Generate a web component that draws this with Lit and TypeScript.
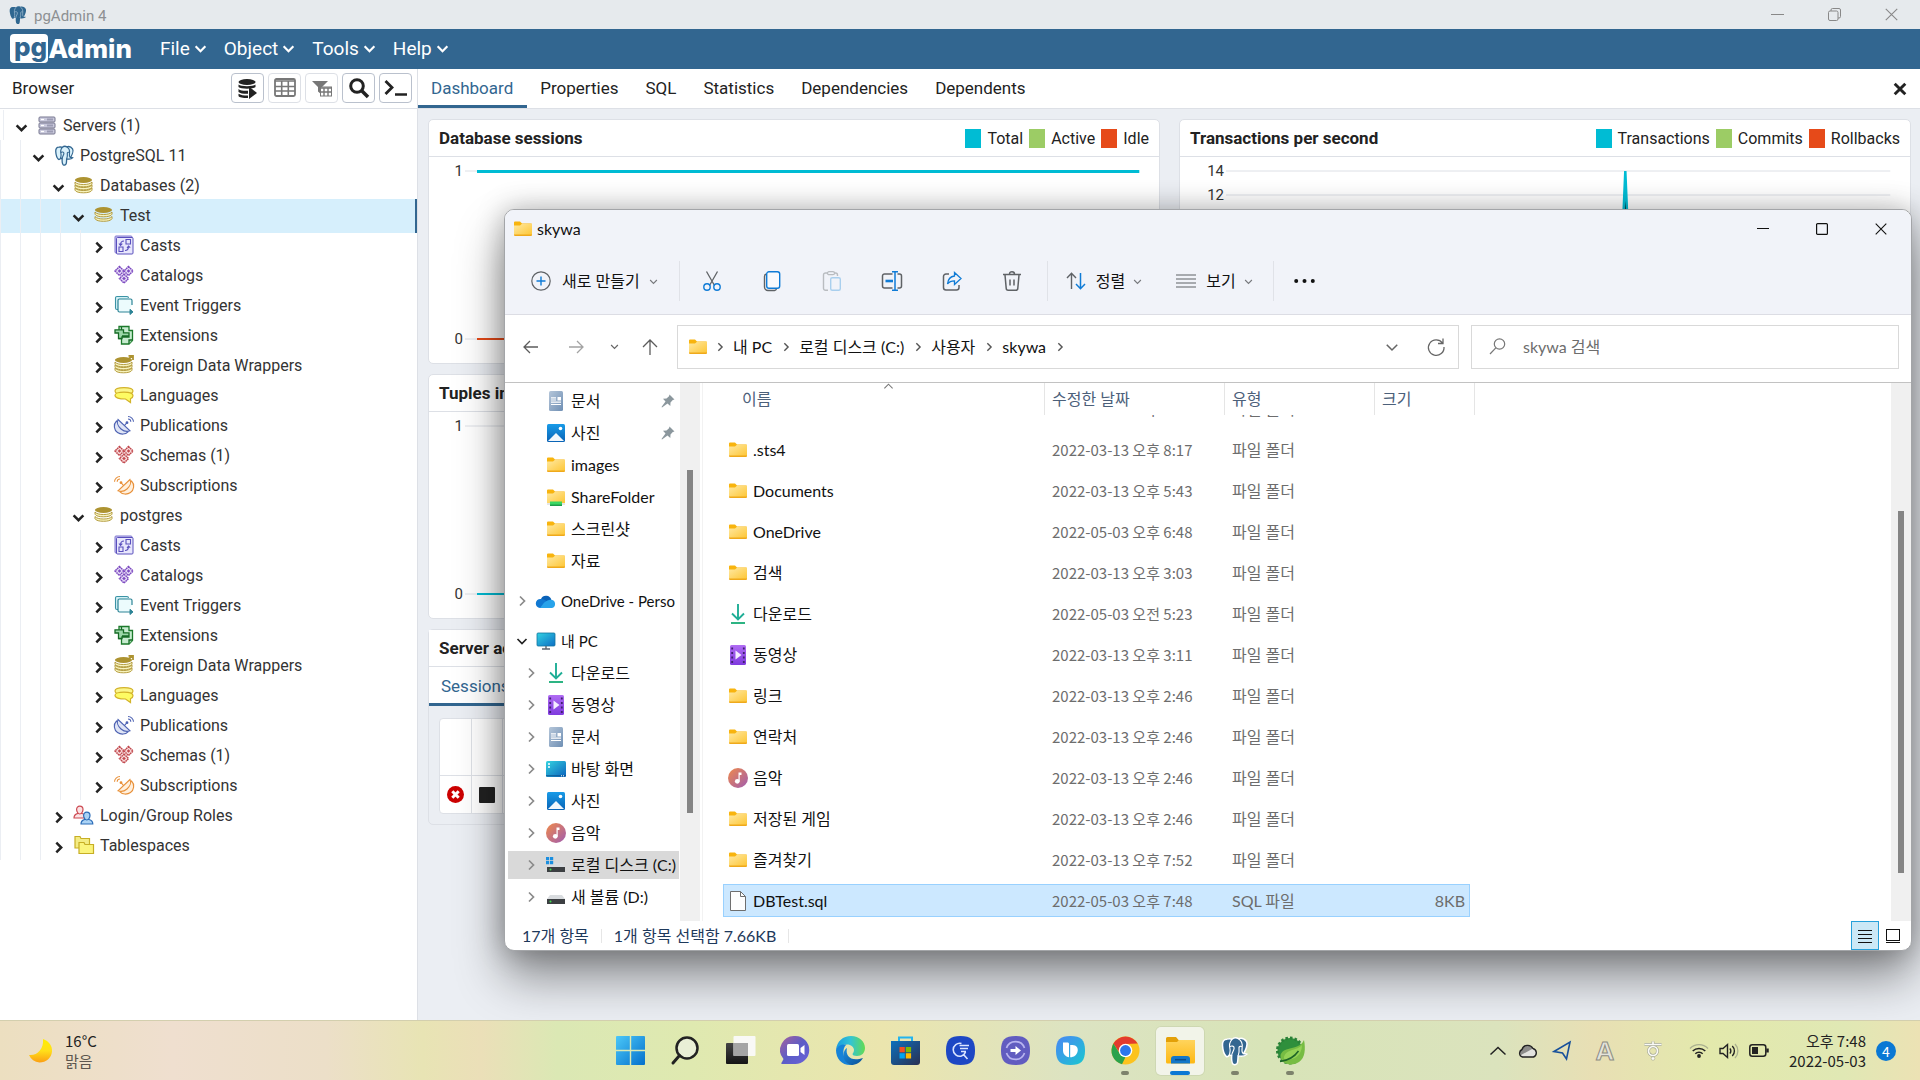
import { LitElement, html, css, svg, nothing } from "lit";
import { customElement } from "lit/decorators.js";
import { classMap } from "lit/directives/class-map.js";

/* ---------- icons ---------- */

const icon = (w: number, h: number, box: string, body: unknown) =>
  html`<svg width=${w} height=${h} viewBox=${box} fill="none" aria-hidden="true">${body}</svg>`;

const elephantShape = svg`
  <path d="M4.500 2.500C2 2.500.8 4.500 1 7.500c.2 3.200 1.500 7.500 3 8.800 1 .8 1.900-.3 2.600-1.300 .5 .4 1.100 .6 1.700 .7-.1 2.500-.1 5.700 1.200 6.800 1 .8 2.900 .5 3.400-1 .5-1.500 .4-3.800 .6-5.600 2.800 .6 5.900-.1 7-1.400-.8-.6-2-.1-2.700-.4 1.900-2.700 3.700-7.500 2.400-9.700C18.600 2 16 1.300 13.700 2.100 12.300 1.300 10 1.400 8.600 2.600 7.500 2.200 6 2.200 4.500 2.500z"/>`;
const elephantLines = svg`
  <path d="M8.600 2.700C6.500 5 6.300 8 7 10.500c.4 1.700-.2 2.600-.4 4.400M13.700 2.200c2.200 1.300 3.500 4.100 3 7.300-.2 1.500-.3 3.500.6 4.400M7 8.500c1.200-.9 3.300-.6 3.300 1 0 2-1.500 3-2 6M16.700 8.500c-.8-.5-2.400-.3-2.500.6.2 2 .2 4-.6 6.500"/>`;
const elephantBlue = (w: number) => icon(w, w, "0 0 22 24", svg`
  <g fill="#336791" stroke="#fff" stroke-width="1.200">${elephantShape}</g>
  <g stroke="#fff" stroke-width=".9">${elephantLines}</g>`);
const elephantSmall = icon(20, 20, "0 0 22 24", svg`
  <g fill="#2f6790">${elephantShape}</g><g stroke="#9db9cf" stroke-width=".9">${elephantLines}</g>`);
const elephantLight = icon(21, 21, "0 0 22 24", svg`
  <g fill="#d9f1fb" stroke="#336791" stroke-width="1.500">${elephantShape}</g>
  <g stroke="#336791" stroke-width="1.300">${elephantLines}</g>`);

const chev = (dir: "down" | "right" | "up", size: number, color: string, sw: number) => {
  const d = { down: "M1.500 4l4.500 4.500L10.500 4", right: "M4 1.500L8.500 6 4 10.500", up: "M1.500 8L6 3.500 10.500 8" }[dir];
  return icon(size, size, "0 0 12 12", svg`<path d=${d} stroke=${color} stroke-width=${sw}/>`);
};

const servers = icon(18, 19, "0 0 18 19", svg`${[1, 7, 13].map((y) => svg`
  <rect x="1" y=${y} width="16" height="5" rx="1" fill="#c9c9dc" stroke="#77778f"/><path d=${`M3 ${y + 2}.500h3`} stroke="#fff" stroke-width="1.200"/>
  <path d=${`M9 ${y + 2}.500h6`} stroke="#9c9cb4" stroke-width="2"/>`)}`);
const band = (y: number) => svg`<path d=${`M1 ${y}c1.500 1.800 4.500 2.500 8.500 2.500s7-.7 8.500-2.500v2.200c-1 1.900-4.500 2.600-8.500 2.600S2 ${y + 4.100} 1 ${y + 2.200}z`} fill="#f7f3bd" stroke="#ad9331" stroke-width=".9"/>`;
const diskStack = (bands: number[], arrow: boolean) => icon(20, 20, "0 0 20 20", svg`
  ${bands.map(band)}
  <ellipse cx="9.500" cy="5" rx="8.600" ry="2.900" fill="#ad9331"/>
  ${arrow ? svg`<path d="M14 4.500L18 1M14.500.900H19V5" stroke="#ad9331" stroke-width="1.800"/>` : nothing}`);
const database = diskStack([11.500, 7], false);
const databases = diskStack([13, 10, 7], false);
const casts = icon(20, 20, "0 0 20 20", svg`
  <rect x="1" y="1" width="17" height="17" rx="1" fill="#c9c5f3" stroke="#8078cf"/>
  <rect x="2.500" y="2.500" width="16.500" height="16.500" rx="1" fill="#e8e7fc" stroke="#5a50bd"/>
  <path d="M12 4.500h4.500V9H12zM5 12h4v4.500H5zM10 6C7.500 6 6.500 7.500 6.500 10M5 8.500L6.500 10.500 8.300 8.700M11 15.500c2.500 0 3.500-1.500 3.500-4M13 13l1.500-2 1.700 1.700" stroke="#5a50bd" stroke-width="1.100"/>`);
const diamonds = (c: string, bg: string) => icon(20, 20, "0 0 20 20", svg`
  ${[[5.500, 6], [14.500, 6], [10, 13.500]].map(([x, y]) => svg`
    <path d=${`M${x} ${y - 4.500}l4.500 4.500l-4.500 4.500l-4.500-4.500z`} fill=${bg} stroke=${c} stroke-width="1.500" stroke-dasharray="1.700 .5"/>
    <path d=${`M${x} ${y - 1.800}l1.800 1.800l-1.800 1.800l-1.800-1.800z`} fill=${c}/>`)}`);
const eventTrigger = icon(20, 20, "0 0 20 20", svg`
  <path d="M4 14.500H3A1.500 1.500 0 011.500 13V3A1.500 1.500 0 013 1.500h10A1.500 1.500 0 0114.500 3" stroke="#3c93a5" stroke-width="1.100" fill="#d2f0f5"/>
  <path d="M18 10V5.500A1.500 1.500 0 0016.500 4h-11A1.500 1.500 0 004 5.500v10A1.500 1.500 0 005.500 17H14" fill="#ecfbfd" stroke="#2c8496" stroke-width="1.200"/>
  <path d="M14 17h3M16 14.300v5.200l3-2.600z" stroke="#2c8496" fill="#2c8496"/>`);
const extensions = icon(20, 20, "0 0 20 20", svg`
  <path d="M5 1.500h10v4h3.500v10L15 19H7.500v-5.500H5z" fill="#c7ecd0" stroke="#1c7a2b" stroke-width="1.300"/>
  <path d="M1 4.800h8.500v3H15V12H8v1.500H4.500V8H1zM8 11h7M15 19v-4h3.500M7.500 2v3" fill="#9bd8a8" stroke="#166b25" stroke-width="1.300"/>`);
const languages = icon(20, 20, "0 0 20 20", svg`
  <g stroke="#d3b32a" stroke-width="1.200"><path d="M1 6C1 4 4.500 2.700 10 2.700S19 4 19 6s-3 3.500-9 3.500S1 8 1 6z" fill="#fbf68b"/>
  <path d="M1 10.200c0-1.800 3.500-3 9-3s9 1.400 9 3.600c0 1.200-.8 2.200-2.500 2.900V17.500l-5-3.500C5 14 1 12.800 1 10.200z" fill="#fdfb63"/></g>`);
const dish = (c: string, bg: string) => svg`
  <path d="M3 6C-.5 9.500.5 15 4 17.500c3.500 2.400 8 2 10.500-.7z" fill=${bg} stroke=${c} stroke-width="1.100"/>
  <path d="M4.500 4.500c-1.500 3 0 7 3 9.500s6 3 9 1.800zM11 10.500l2.500-2.800" fill=${bg} stroke=${c} stroke-width="1.100"/>
  <circle cx="13.500" cy="7.700" r="1.400" fill=${c}/>
  <path d="M14.500 4c1.500 0 2.800 1.300 2.800 2.800M14.500 1.500c3 0 5.500 2.300 5.500 5.300" stroke=${c} stroke-width="1.100"/>`;
const publications = icon(22, 20, "0 0 21 20", dish("#4e63b3", "#dfe4f5"));
const subscriptions = icon(22, 20, "0 0 21 20", svg`<g transform="translate(21 0) scale(-1 1)">${dish("#e8913a", "#fff0de")}</g>`);
const person = (x: number, y: number, c: string, bg: string) => svg`
  <g transform=${`translate(${x} ${y})`} fill=${bg} stroke=${c} stroke-width="1.200"><path d="M1 13c0-3.500 2-4 3.500-4.500h4.500c2 .5 3.800 1 3.800 4.500z"/>
  <path d="M6.800 1.200c2 0 3.200 1.300 3.200 3.300S8.500 9 6.800 9 3.600 6.500 3.600 4.500s1.200-3.300 3.200-3.300z"/></g>`;
const roles = icon(22, 20, "0 0 22 20", svg`${person(0, 0, "#cc4a52", "#fbe3e5")}${person(7, 6, "#2b6cb8", "#abd3f5")}`);
const tablespaces = icon(20, 20, "0 0 20 20", svg`<g stroke="#c7ae25" stroke-width="1.200">
  <path d="M1 1.500h5l1 2h8.500V13H1z" fill="#f4ec84"/><path d="M5 7.500h5l1 2h8.500v9H5z" fill="#fbf47c"/></g>`);

const folder = icon(18, 16, "0 0 18 16", svg`
  <defs><linearGradient id="fo" x1="0" y1="0" x2="1" y2="1"><stop offset="0" stop-color="#ffe9a2"/><stop offset="1" stop-color="#fdc636"/></linearGradient></defs>
  <path d="M0 1.500A1 1 0 011 .500h5L8 2.500h9a1 1 0 011 1V6H0z" fill="#f8b40e"/>
  <path d="M0 4.500h6L8 2.800h10V14H0z" fill="url(#fo)"/><path d="M0 13.500h18v.5a1 1 0 01-1 1H1a1 1 0 01-1-1z" fill="#efa91b"/>`);
const shareFolder = icon(18, 18, "0 0 18 18", svg`
  <defs><linearGradient id="sf" x1="0" y1="0" x2="1" y2="1"><stop offset="0" stop-color="#ffe9a2"/><stop offset="1" stop-color="#fdc636"/></linearGradient></defs>
  <path d="M0 2.500a1 1 0 011-1h5l2 2h9a1 1 0 011 1V7H0z" fill="#f8b40e"/><path d="M0 5.500h6l2-1.700h10V15H0z" fill="url(#sf)"/>
  <path d="M0 16h18" stroke="#c9cdd0"/><path d="M3 13.500h12V18H3z" fill="#3bd763"/><path d="M3 16.500h12V18H3z" fill="#1d9c4a"/>`);
const docIcon = icon(18, 20, "0 0 18 20", svg`
  <defs><linearGradient id="dc" x1="0" y1="0" x2="1" y2="1"><stop offset="0" stop-color="#b5c6d9"/><stop offset="1" stop-color="#6f8fb4"/></linearGradient></defs>
  <rect x="2" width="14" height="20" rx="1.500" fill="url(#dc)"/><path d="M4 6.800h5M4 9h5M4 11.200h10M4 13.500h10" stroke="#fff" stroke-width="1.200"/><path d="M10.500 6h3.500v3.500h-3.500z" fill="#fff"/>`);
const picIcon = icon(18, 18, "0 0 18 18", svg`
  <defs><linearGradient id="pc" x1="0" y1="0" x2="0" y2="1"><stop offset="0" stop-color="#189be8"/><stop offset="1" stop-color="#0a63b5"/></linearGradient></defs>
  <rect width="18" height="18" rx="1.500" fill="url(#pc)"/><path d="M1 17l8-8 8 8z" fill="#f2f7fc"/><circle cx="13.500" cy="4.500" r="1.800" fill="#fff"/>`);
const downIcon = icon(18, 20, "0 0 18 20", svg`
  <path d="M9 0v15M3 9.500l6 6 6-6" stroke="#1fae96" stroke-width="1.900"/><path d="M2 19h14" stroke="#22b07d" stroke-width="1.900"/>`);
const videoIcon = icon(18, 20, "0 0 18 20", svg`
  <defs><linearGradient id="vd" x1="0" y1="0" x2="0" y2="1"><stop offset="0" stop-color="#b06cf3"/><stop offset="1" stop-color="#7f3ade"/></linearGradient></defs>
  <rect x="1" width="16" height="20" rx="1.500" fill="url(#vd)"/>
  <path d="M3.200 2.500v16M14.800 2.500v16" stroke="#41206f" stroke-width="1.800" stroke-dasharray="2 2.500"/><path d="M6.500 5.500v9l6-4.500z" fill="#f5edff"/>`);
const musicIcon = icon(20, 20, "0 0 20 20", svg`
  <defs><linearGradient id="mu" x1="0" y1="0" x2="1" y2="1"><stop offset="0" stop-color="#f08a4a"/><stop offset="1" stop-color="#a05cb0"/></linearGradient></defs>
  <circle cx="10" cy="10" r="10" fill="url(#mu)"/><path d="M10.500 4.500h3V7h-1.800v6h-1.200z" fill="#fff"/><circle cx="9.300" cy="13.300" r="2.400" fill="#fff"/>`);
const deskIcon = icon(20, 16, "0 0 20 16", svg`
  <defs><linearGradient id="dk" x1="0" y1="0" x2="1" y2="1"><stop offset="0" stop-color="#35d3e0"/><stop offset="1" stop-color="#0b62bd"/></linearGradient></defs>
  <rect width="20" height="16" rx="1.500" fill="url(#dk)"/><path d="M2 3h2M2 6h2" stroke="#fff" stroke-width="1.600"/><path d="M0 14.800h20" stroke="#0c5590"/><path d="M15 14.800h1M17 14.800h1" stroke="#fff"/>`);
const pcIcon = icon(18, 17, "0 0 18 17", svg`
  <defs><linearGradient id="mp" x1="0" y1="0" x2="1" y2="1"><stop offset="0" stop-color="#32d2e2"/><stop offset="1" stop-color="#0d6ec5"/></linearGradient></defs>
  <rect width="18" height="13" rx="1" fill="url(#mp)" stroke="#1173a0" stroke-width=".8"/><path d="M9 13v3M5 16h8" stroke="#5d6670" stroke-width="1.400"/>`);
const cloudIcon = icon(20, 13, "0 0 20 13", svg`
  <path d="M5 4a5.500 5.500 0 0110.300.800L10 9z" fill="#0b62b8"/><path d="M4 13a4.200 4.200 0 01.6-9c2.600-.4 4.400 1 6.400 2.300L6 13z" fill="#1078d2"/>
  <path d="M8 7.700c3-2.400 5.500-3.400 7.500-2.900A4.200 4.200 0 0116 13H4z" fill="#28a3ea"/>`);
const drive = (win: boolean) => icon(18, 16, "0 0 18 16", svg`
  <path d="M3 6h12l3 4H0z" fill="#d9dcdf"/><rect y="10" width="18" height="5" fill="#3c3f42"/><circle cx="3.500" cy="12.500" r="1" fill="#40e050"/>
  ${win ? svg`<path d="M-1 0h3.200v3.200H-1zM3 0h3.200v3.200H3zM-1 4h3.200v3.200H-1zM3 4h3.200v3.200H3z" fill="#1b8fe0"/>` : nothing}`);
const fileIcon = icon(18, 20, "0 0 18 20", svg`<path d="M1.500.500h10l5 5v14h-15z" fill="#fdfdfd" stroke="#6e6e6e"/><path d="M11.500.500v5h5" stroke="#6e6e6e"/>`);
const pin = icon(14, 14, "0 0 14 14", svg`<path d="M8.500.500l5 5-1.700.500-2.300 2.500-.2 3.500L6.500 9.500 1 13.500.500 13 4.500 7.500 2 4.700l3.500-.2L8 2.200z" fill="#8b979d"/>`);

const closeX = (s: number, c: string, sw: number) => icon(s, s, "0 0 12 12", svg`<path d="M.7.700l10.600 10.600M11.300.700L.7 11.300" stroke=${c} stroke-width=${sw}/>`);

/* ---------- pgAdmin: object browser ---------- */

type Node = { depth: number; label: string; icon: unknown; open?: boolean; selected?: boolean };
const children = (): Node[] => [
  { depth: 4, label: "Casts", icon: casts },
  { depth: 4, label: "Catalogs", icon: diamonds("#7d4bc0", "#e6dcf7") },
  { depth: 4, label: "Event Triggers", icon: eventTrigger },
  { depth: 4, label: "Extensions", icon: extensions },
  { depth: 4, label: "Foreign Data Wrappers", icon: diskStack([13, 10, 7], true) },
  { depth: 4, label: "Languages", icon: languages },
  { depth: 4, label: "Publications", icon: publications },
  { depth: 4, label: "Schemas (1)", icon: diamonds("#c14a4f", "#f9dcdd") },
  { depth: 4, label: "Subscriptions", icon: subscriptions },
];
const tree: Node[] = [
  { depth: 0, label: "Servers (1)", icon: servers, open: true },
  { depth: 1, label: "PostgreSQL 11", icon: elephantLight, open: true },
  { depth: 2, label: "Databases (2)", icon: databases, open: true },
  { depth: 3, label: "Test", icon: database, open: true, selected: true },
  ...children(),
  { depth: 3, label: "postgres", icon: database, open: true },
  ...children(),
  { depth: 2, label: "Login/Group Roles", icon: roles },
  { depth: 2, label: "Tablespaces", icon: tablespaces },
];

const reset = css`
  *, *::before, *::after { box-sizing: border-box; }
  svg { display: block; flex: none; overflow: visible; }
  button, input { font: inherit; color: inherit; background: none; border: 0; padding: 0; margin: 0; }
  ul, h2 { margin: 0; padding: 0; list-style: none; }
  a { color: inherit; text-decoration: none; }
`;

@customElement("object-browser")
export class ObjectBrowser extends LitElement {
  static styles = [reset, css`
    :host { display: flex; flex-direction: column; background: #fff; border-right: 1px solid #dde0e6; }
    .head { display: flex; align-items: center; height: 40px; padding: 0 5px 2px 12px; border-bottom: 1px solid #dde0e6; gap: 4px; }
    .title { flex: 1; color: #222; font-size: 17px; font-weight: 400; }
    .tool { width: 33px; height: 30px; border: 1px solid #bac1cd; border-radius: 4px; display: grid; place-items: center; }
    .tool.off { border-color: #dde0e6; }
    .tree { padding-top: 1px; }
    .row { display: flex; align-items: center; height: 30px; color: #333; font-size: 16px; }
    .guide { width: 20px; height: 30px; border-left: 1px solid #ebeef3; }
    .body { display: flex; align-items: center; height: 30px; border-left: 1px solid #ebeef3; }
    .root .body { margin-left: 3px; }
    .arrow { width: 20px; margin: 4px 1px 0 11px; }
    .pic { width: 22px; display: grid; place-items: center; margin-right: 5px; }
    .selected { background: #d6effc; height: 34px; margin: -1px 0 -3px; padding-bottom: 2px; border-right: 2px solid #326690; }
  `];
  render() {
    return html`
      <div class="head">
        <h2 class="title">Browser</h2>
        <button class="tool" aria-label="Query Tool">${icon(20, 20, "0 0 20 20", svg`<g fill="#222"><ellipse cx="9" cy="4" rx="8.500" ry="3"/><path d="M.5 6.500c2 2.300 15 2.300 17 0v2.500c-2 2.300-15 2.300-17 0zM.5 11c2 1.800 6 2 9.500 1.800v3c-4 .1-8-.3-9.500-1.800zM.5 15.800c2 1.400 5 1.700 9.500 1.700V20C6 20.100 1 19.500.5 18z"/><path d="M11 8.500l8 6.500-8 6z"/></g>`)}</button>
        <button class="tool off" aria-label="View Data">${icon(22, 19, "0 0 22 19", svg`<rect x="1" y="1" width="20" height="17" rx="1.500" stroke="#777" stroke-width="1.800"/><path d="M1 3h20M1 8.500h20M1 13h20M7.700 3v15M14.300 3v15" stroke="#777" stroke-width="1.600"/>`)}</button>
        <button class="tool off" aria-label="Filtered Rows">${icon(20, 17, "0 0 20 17", svg`<path d="M0 2h16l-6 6v8l-4-3.500V8z" fill="#777"/><rect x="8.500" y="8" width="11" height="9" fill="#fff" stroke="#777"/><path d="M8.500 9h11M8.500 13h11M12 9v8M16 9v8" stroke="#777" stroke-width="1.400"/>`)}</button>
        <button class="tool" aria-label="Search Objects">${icon(20, 20, "0 0 20 20", svg`<circle cx="8" cy="8" r="6.300" stroke="#222" stroke-width="3"/><path d="M12.500 12.500l6.500 6.500" stroke="#222" stroke-width="3.600"/>`)}</button>
        <button class="tool" aria-label="PSQL Tool">${icon(23, 16, "0 0 23 16", svg`<path d="M1.500 1l6.500 6.500L1.500 14" stroke="#222" stroke-width="2.800"/><path d="M11 14.500h12" stroke="#222" stroke-width="2.500"/>`)}</button>
      </div>
      <ul class="tree" role="tree">
        ${tree.map((n) => html`
          <li class=${classMap({ row: true, root: n.depth === 0, selected: !!n.selected })} role="treeitem" aria-expanded=${n.open ? "true" : "false"}>
            ${Array.from({ length: n.depth }, () => html`<span class="guide"></span>`)}
            <span class="body">
              <span class="arrow">${chev(n.open ? "down" : "right", 13, "#222", 2.3)}</span>
              <span class="pic">${n.icon}</span>${n.label}
            </span>
          </li>`)}
      </ul>`;
  }
}

/* ---------- pgAdmin: dashboard ---------- */

type Legend = [string, string][];
type Tick = { label: string; y: number };

@customElement("pg-dashboard")
export class PgDashboard extends LitElement {
  static styles = [reset, css`
    :host { display: flex; flex-direction: column; background: #ebeef3; min-width: 0; overflow: hidden; }
    .tabs { display: flex; height: 40px; background: #fff; border-bottom: 1px solid #dde0e6; font-size: 17px; color: #222; align-items: stretch; }
    .tab { padding: 2px 14px 0 13px; height: 39px; border-bottom: 3px solid transparent; }
    .tab.on { color: #326690; border-color: #326690; }
    .x { margin-left: auto; padding: 0 14px; }
    .grid { display: grid; grid-template-columns: 1fr 1fr; gap: 10px 19px; padding: 10px 9px 0 10px; }
    .card { background: #fff; border: 1px solid #dde0e6; border-radius: 5px; height: 245px; }
    .head { display: flex; align-items: center; height: 37px; padding: 0 10px; border-bottom: 1px solid #dde0e6; gap: 6px; font-size: 16px; color: #222; }
    .name { flex: 1; font-size: 17px; font-weight: 700; }
    .swatch { width: 16px; height: 19px; }
    .plot { display: block; width: 100%; height: 206px; }
    .plot text { font-size: 15px; fill: #333; text-anchor: end; }
    .wide { grid-column: 1 / -1; height: 196px; background: #ebeef3; }
    .wide .head, .subtabs { background: #fff; }
    .subtabs { height: 39px; border-bottom: 1px solid #dde0e6; }
    .subtabs .tab { font-size: 17px; height: 39px; padding: 2px 12px 0; }
    .sessions { margin: 12px 10px; width: 96%; border-collapse: separate; border-spacing: 0; background: #fff; border: 1px solid #dde0e6; border-radius: 4px; }
    .sessions th { height: 57px; border-right: 1px solid #dde0e6; border-bottom: 1px solid #dde0e6; }
    .sessions td { height: 37px; padding: 0 7px; border-right: 1px solid #dde0e6; }
    .narrow { width: 31px; }
  `];
  private card(name: string, legend: Legend, ticks: Tick[], series: unknown) {
    return html`<section class="card">
      <div class="head"><h2 class="name">${name}</h2>
        ${legend.map(([t, c]) => html`<svg class="swatch" viewBox="0 0 16 19"><rect width="16" height="19" fill=${c}/></svg><span>${t}</span>`)}
      </div>
      <svg class="plot">
        ${ticks.map((t) => svg`<text x=${t.label.length > 1 ? 44 : 34} y=${t.y + 5}>${t.label}</text>
          <line x1=${t.label.length > 1 ? 46 : 36} x2="97.300%" y1=${t.y} y2=${t.y} stroke="#dde0e6"/>`)}
        ${series}
      </svg></section>`;
  }
  render() {
    const cyan = "#00bcd4", green = "#9ccc65", red = "#e64a19";
    const unit = [{ label: "1", y: 14 }, { label: "0", y: 182 }];
    return html`
      <div class="tabs">
        ${["Dashboard", "Properties", "SQL", "Statistics", "Dependencies", "Dependents"].map((t, i) =>
          html`<button class=${i ? "tab" : "tab on"}>${t}</button>`)}
        <button class="x" aria-label="Close panel">${closeX(12, "#222", 2.9)}</button>
      </div>
      <div class="grid">
        ${this.card("Database sessions", [["Total", cyan], ["Active", green], ["Idle", red]], unit, svg`
          <line x1="48" x2="97.300%" y1="14.500" y2="14.500" stroke=${cyan} stroke-width="3"/>
          <line x1="48" x2="97.300%" y1="182" y2="182" stroke=${red} stroke-width="2"/>`)}
        ${this.card("Transactions per second", [["Transactions", cyan], ["Commits", green], ["Rollbacks", red]],
          [{ label: "14", y: 14 }, { label: "12", y: 38 }], svg`
          <svg x="61%" y="14" width="20" height="191"><path d="M-5 167L-.5 20 4 167z" fill=${green}/><path d="M-7 167L0 0l7 167" stroke=${cyan} stroke-width="2.500"/></svg>`)}
        ${this.card("Tuples in", [], unit, svg`
          <line x1="48" x2="97.300%" y1="182" y2="182" stroke=${cyan} stroke-width="2"/>`)}
        <section class="card wide">
          <div class="head"><h2 class="name">Server activity</h2></div>
          <div class="subtabs"><button class="tab on">Sessions</button></div>
          <table class="sessions">
            <thead><tr><th class="narrow"></th><th class="narrow"></th><th></th></tr></thead>
            <tbody><tr>
              <td>${icon(17, 17, "0 0 17 17", svg`<circle cx="8.500" cy="8.500" r="8.500" fill="#c00"/><path d="M5.300 5.300l6.400 6.400M11.700 5.300l-6.400 6.400" stroke="#fff" stroke-width="3"/>`)}</td>
              <td>${icon(16, 16, "0 0 16 16", svg`<rect width="16" height="16" rx="1" fill="#222"/>`)}</td><td></td>
            </tr></tbody>
          </table>
        </section>
      </div>`;
  }
}

@customElement("pg-admin")
export class PgAdmin extends LitElement {
  static styles = [reset, css`
    :host { display: flex; flex-direction: column; font-family: Roboto, "Liberation Sans", sans-serif; min-height: 0; }
    .caption { display: flex; align-items: center; height: 29px; background: #e6eaed; color: #8d9092; font-size: 15px; padding-left: 8px; }
    .caption .t { flex: 1; padding: 3px 0 0 6px; }
    .win { width: 57px; height: 29px; display: grid; place-items: center; }
    .menu { display: flex; align-items: center; height: 40px; background: #326690; color: #fff; font-size: 19px; padding: 0 0 2px 10px; }
    .logo { display: flex; align-items: center; font: 800 26px/29px Inter, "Open Sans", sans-serif; margin-right: 19px; }
    .pg { background: #fff; color: #326690; border-radius: 4px; height: 29px; padding: 0 1px 0 4px; line-height: 26px; }
    .item { display: flex; align-items: center; gap: 4px; padding: 0 8px 0 9px; height: 38px; }
    .panels { flex: 1; display: grid; grid-template-columns: 418px 1fr; min-height: 0; }
  `];
  render() {
    return html`
      <header class="caption">${elephantSmall}<span class="t">pgAdmin 4</span>
        <button class="win" aria-label="Minimize">${icon(13, 13, "0 0 13 13", svg`<path d="M0 6.500h13" stroke="#888"/>`)}</button>
        <button class="win" aria-label="Restore">${icon(13, 13, "0 0 13 13", svg`<rect x=".5" y="3" width="9.500" height="9.500" rx="1.500" stroke="#888"/><path d="M3 3V2A1.500 1.500 0 014.500.500h6.500A1.500 1.500 0 0112.500 2v6.500A1.500 1.500 0 0111 10h-1" stroke="#888"/>`)}</button>
        <button class="win" aria-label="Close">${closeX(13, "#888", 1)}</button>
      </header>
      <nav class="menu"><a class="logo" href="#"><span class="pg">pg</span><span>Admin</span></a>
        ${["File", "Object", "Tools", "Help"].map((m) => html`<button class="item">${m}${chev("down", 13, "#fff", 2)}</button>`)}
      </nav>
      <div class="panels"><object-browser></object-browser><pg-dashboard></pg-dashboard></div>`;
  }
}

/* ---------- file explorer ---------- */

type Place = { label: string; icon: unknown; level: number; pinned?: boolean; arrow?: "right" | "down"; current?: boolean };
const places: Place[] = [
  { label: "문서", icon: docIcon, level: 1, pinned: true },
  { label: "사진", icon: picIcon, level: 1, pinned: true },
  { label: "images", icon: folder, level: 1 },
  { label: "ShareFolder", icon: shareFolder, level: 1 },
  { label: "스크린샷", icon: folder, level: 1 },
  { label: "자료", icon: folder, level: 1 },
  { label: "OneDrive - Perso", icon: cloudIcon, level: 0, arrow: "right" },
  { label: "내 PC", icon: pcIcon, level: 0, arrow: "down" },
  { label: "다운로드", icon: downIcon, level: 1, arrow: "right" },
  { label: "동영상", icon: videoIcon, level: 1, arrow: "right" },
  { label: "문서", icon: docIcon, level: 1, arrow: "right" },
  { label: "바탕 화면", icon: deskIcon, level: 1, arrow: "right" },
  { label: "사진", icon: picIcon, level: 1, arrow: "right" },
  { label: "음악", icon: musicIcon, level: 1, arrow: "right" },
  { label: "로컬 디스크 (C:)", icon: drive(true), level: 1, arrow: "right", current: true },
  { label: "새 볼륨 (D:)", icon: drive(false), level: 1, arrow: "right" },
];
const dir = "파일 폴더";
const files: [string, unknown, string, string, string][] = [
  ["", nothing, "2022-03-13 오후 8:17", dir, ""],
  [".sts4", folder, "2022-03-13 오후 8:17", dir, ""],
  ["Documents", folder, "2022-03-13 오후 5:43", dir, ""],
  ["OneDrive", folder, "2022-05-03 오후 6:48", dir, ""],
  ["검색", folder, "2022-03-13 오후 3:03", dir, ""],
  ["다운로드", downIcon, "2022-05-03 오전 5:23", dir, ""],
  ["동영상", videoIcon, "2022-03-13 오후 3:11", dir, ""],
  ["링크", folder, "2022-03-13 오후 2:46", dir, ""],
  ["연락처", folder, "2022-03-13 오후 2:46", dir, ""],
  ["음악", musicIcon, "2022-03-13 오후 2:46", dir, ""],
  ["저장된 게임", folder, "2022-03-13 오후 2:46", dir, ""],
  ["즐겨찾기", folder, "2022-03-13 오후 7:52", dir, ""],
  ["DBTest.sql", fileIcon, "2022-05-03 오후 7:48", "SQL 파일", "8KB"],
];

const G = "#5f6266", B = "#0f7bd6";
const actions: [string, unknown][] = [
  ["잘라내기", icon(20, 20, "0 0 20 20", svg`<path d="M4.500.500l8 14M15.500.500l-8 14" stroke=${G} stroke-width="1.300"/><circle cx="5" cy="16" r="3.200" stroke=${B} stroke-width="1.400"/><circle cx="15" cy="16" r="3.200" stroke=${B} stroke-width="1.400"/>`)],
  ["복사", icon(20, 20, "0 0 20 20", svg`<path d="M4.500 3A2.500 2.500 0 002.500 5.500V16a3.500 3.500 0 003.500 3.500h6.500a2.500 2.500 0 002-1.500" stroke=${G} stroke-width="1.400"/><rect x="4.700" y=".7" width="13" height="16.600" rx="2.300" fill="#f8fafd" stroke=${B} stroke-width="1.400"/>`)],
  ["붙여넣기", icon(20, 20, "0 0 20 20", svg`<path d="M6 19.300H3.500a2 2 0 01-2-2V4a2 2 0 012-2H6M12 2h1.500a2 2 0 012 2v1" stroke="#b9bcc0" stroke-width="1.400"/><rect x="5.500" y=".7" width="7" height="3" rx="1.500" stroke="#b9bcc0" stroke-width="1.300"/><rect x="8.700" y="6.700" width="9.600" height="12.600" rx="1.500" stroke="#a9cfee" stroke-width="1.400"/>`)],
  ["이름 바꾸기", icon(22, 20, "0 0 22 20", svg`<path d="M11.500 3H3.500a2 2 0 00-2 2v10a2 2 0 002 2h8M16.500 3h2a2 2 0 012 2v10a2 2 0 01-2 2h-2" stroke=${G} stroke-width="1.500"/><path d="M14 .700v18.600M11 .700h6M11 19.300h6" stroke=${B} stroke-width="1.500"/><path d="M4.500 10H12" stroke=${B} stroke-width="2.600"/>`)],
  ["공유", icon(20, 20, "0 0 20 20", svg`<path d="M7 3H4A2.500 2.500 0 001.500 5.500v11A2.500 2.500 0 004 19h10.500a2.500 2.500 0 002.500-2.500V14" stroke=${G} stroke-width="1.500"/><path d="M12.500 1.500l6.500 6-6.500 6v-3.700c-3.500 0-5.500 1-7 3.200.4-4 2.600-7.500 7-8z" stroke=${B} stroke-width="1.300"/>`)],
  ["삭제", icon(20, 20, "0 0 20 20", svg`<path d="M1 3.500h18M7.500 3.200C7.500 1.500 8.500.700 10 .700s2.500.8 2.500 2.500M3 4l1.200 13.300a2 2 0 002 2h7.600a2 2 0 002-2L17 4M8 8.500v6M12 8.500v6" stroke=${G} stroke-width="1.500"/>`)],
];

@customElement("file-explorer")
export class FileExplorer extends LitElement {
  static styles = [reset, css`
    :host { display: flex; flex-direction: column; background: #fff; border: 1px solid #a3a5a8; border-radius: 10px; overflow: hidden;
      font: 16px/20px Lato, "Noto Sans CJK KR", sans-serif; color: #111;
      box-shadow: 0 26px 48px rgba(0,0,0,.42), 0 0 28px rgba(0,0,0,.26); }
    .top { background: #f1f3f9; border-bottom: 1px solid #dcdde4; }
    .caption { display: flex; align-items: center; height: 38px; padding: 0 1px 0 9px; }
    .caption .t { flex: 1; padding-left: 5px; }
    .win { width: 59px; height: 34px; display: grid; place-items: center; }
    .commands { display: flex; align-items: center; height: 66px; padding: 0 12px 0 26px; }
    .cmd { display: flex; align-items: center; gap: 8px; height: 40px; }
    .cmd span { padding-left: 2px; }
    .acts { display: flex; padding: 0 5px 0 2px; }
    .act { width: 60px; height: 40px; display: grid; place-items: center; }
    .sep { width: 1px; height: 40px; background: #e0e2e8; }
    .new { padding-right: 21px; }
    .new span { padding: 0 1px 0 3px; }
    .sort { padding: 0 34px 0 18px; }
    .view { padding-right: 20px; }
    .more { padding-left: 20px; }
    .nav { display: flex; align-items: center; height: 68px; padding: 0 12px 4px 7px; border-bottom: 1px solid #c2c2c2; }
    .go { width: 36px; height: 36px; display: grid; place-items: center; }
    .gofwd { margin: 0 2px 0 10px; }
    .goup { margin-right: 9px; }
    .address { flex: 782 1 782px; min-width: 0; display: flex; align-items: center; height: 44px; border: 1px solid #d9d9d9; padding: 0 13px 0 11px; gap: 8px; }
    .crumb { display: flex; align-items: center; gap: 9px; }
    .grow { flex: 1; }
    .refresh { margin-left: 9px; }
    .search { flex: 428 1 428px; min-width: 0; display: flex; align-items: center; height: 44px; border: 1px solid #d9d9d9; margin-left: 12px; padding: 0 17px; gap: 17px; }
    .search input { flex: 1; min-width: 0; outline: 0; }
    .search input::placeholder { color: #6d6d6d; opacity: 1; }
    .main { flex: 1; display: flex; min-height: 0; }
    .side { width: 175px; padding: 2px 1px 0 3px; overflow: hidden; }
    .place { display: flex; align-items: center; height: 32px; white-space: nowrap; }
    .place.group { margin-top: 8px; font-size: 15px; }
    .place.current a { background: #d9d9d9; height: 28px; }
    .place a { display: flex; align-items: center; flex: 1; min-width: 0; height: 32px; }
    .tw { width: 9px; height: 12px; margin: 0 0 0 8px; display: grid; place-items: center; }
    .deep .tw { margin-left: 17px; }
    .pic { width: 20px; display: grid; place-items: center; margin: 0 5px 0 11px; }
    .deep .pic { margin-left: 12px; }
    .pin { margin-left: auto; margin-right: 4px; }
    .track { width: 20px; background: #f0f0f0; padding: 87px 7px 0; }
    .thumb { width: 6px; height: 343px; background: #858585; }
    .right.track { padding-top: 128px; }
    .right .thumb { height: 362px; }
    .list { flex: 1; border: 0; margin-left: 2px; border-left: 1px solid #f2f2f2; display: flex; flex-direction: column; min-width: 0; }
    thead, tbody { display: block; }
    tbody { overflow: hidden; flex: 1; min-height: 0; padding-left: 20px; }
    thead { padding-left: 20px; }
    tr { display: grid; grid-template-columns: 322px 180px 150px 95px; width: 747px; }
    thead tr { grid-template-columns: 322px 180px 150px 100px; width: 752px; }
    th { height: 32px; padding: 6px 0 0 7px; border-right: 1px solid #e5e5e5; color: #4c607a; font-weight: 400; text-align: left; }
    th:first-child { padding-left: 19px; display: flex; gap: 112px; }
    .caret { margin-top: -8px; }
    tbody tr { height: 33px; margin-bottom: 8px; align-items: center; }
    tbody tr:first-child { margin-top: -23px; }
    td { padding: 0 0 0 7px; color: #6d6d6d; white-space: nowrap; }
    .date { font: 15px/20px "Noto Sans CJK KR", sans-serif; }
    td:first-child { display: flex; align-items: center; gap: 5px; padding-left: 5px; color: #111; }
    td:last-child { text-align: right; padding-right: 5px; }
    .fi { width: 20px; display: grid; place-items: center; }
    .sel { background: #cce8ff; box-shadow: inset 0 0 0 1px #99d1ff; }
    .status { display: flex; align-items: center; height: 29px; padding: 0 11px 0 17px; color: #1e395b; }
    .status .bar { width: 1px; height: 14px; background: #e6e6e6; margin: 0 12px; }
    .mode { width: 28px; height: 29px; display: grid; place-items: center; }
    .mode.on { border: 1px solid #26a0da; background: #cbe8f6; }
    .mode.big { width: 14px; margin-left: 7px; }
  `];
  render() {
    const sm = () => chev("down", 9, "#77797d", 1.5);
    return html`
      <div class="top">
        <header class="caption">${folder}<span class="t">skywa</span>
          <button class="win" aria-label="최소화">${icon(12, 12, "0 0 12 12", svg`<path d="M0 5.500h12" stroke="#111"/>`)}</button>
          <button class="win" aria-label="최대화">${icon(12, 12, "0 0 12 12", svg`<rect x=".6" y=".6" width="10.800" height="10.800" rx="1" stroke="#111" stroke-width="1.200"/>`)}</button>
          <button class="win" aria-label="닫기">${closeX(12, "#111", 1.1)}</button>
        </header>
        <div class="commands">
          <button class="cmd new">${icon(20, 20, "0 0 20 20", svg`<circle cx="10" cy="10" r="9.200" stroke=${G} stroke-width="1.200"/><path d="M10 5.500v9M5.500 10h9" stroke=${B} stroke-width="1.400"/>`)}<span>새로 만들기</span>${sm()}</button>
          <i class="sep"></i>
          <div class="acts">${actions.map(([l, i]) => html`<button class="act" aria-label=${l}>${i}</button>`)}</div>
          <i class="sep"></i>
          <button class="cmd sort">${icon(20, 18, "0 0 20 18", svg`<path d="M5.500 17V1.500M1 6l4.500-4.700L10 6" stroke=${G} stroke-width="1.400"/><path d="M14.500 1v15.500M10 12l4.500 4.700L19 12" stroke=${B} stroke-width="1.500"/>`)}<span>정렬</span>${sm()}</button>
          <button class="cmd view">${icon(20, 14, "0 0 20 14", svg`<path d="M0 1h20M0 5h20M0 9h20M0 13h20" stroke=${G} stroke-width="1.200"/>`)}<span>보기</span>${sm()}</button>
          <i class="sep"></i>
          <button class="cmd more" aria-label="더 보기">${icon(21, 4, "0 0 21 4", svg`<g fill="#111"><circle cx="2.200" cy="2" r="2"/><circle cx="10.500" cy="2" r="2"/><circle cx="18.800" cy="2" r="2"/></g>`)}</button>
        </div>
      </div>
      <div class="nav">
        <button class="go" aria-label="뒤로">${icon(15, 14, "0 0 15 14", svg`<path d="M15 7H1M7 1L1 7l6 6" stroke="#5c5c5c" stroke-width="1.300"/>`)}</button>
        <button class="go gofwd" aria-label="앞으로">${icon(15, 14, "0 0 15 14", svg`<path d="M0 7h14M8 1l6 6-6 6" stroke="#a3a3a3" stroke-width="1.300"/>`)}</button>
        <button class="go" aria-label="최근 위치">${chev("down", 9, "#666", 1.6)}</button>
        <button class="go goup" aria-label="위로">${icon(16, 16, "0 0 16 16", svg`<path d="M8 16V1M1 8l7-7 7 7" stroke="#5c5c5c" stroke-width="1.300"/>`)}</button>
        <div class="address">${folder}<span class="crumb">${chev("right", 10, "#555", 1.7)}</span>
          ${["내 PC", "로컬 디스크 (C:)", "사용자", "skywa"].map((c) => html`<a class="crumb" href="#"><span>${c}</span>${chev("right", 10, "#555", 1.7)}</a>`)}
          <span class="grow"></span>
          <button class="go" aria-label="이전 위치">${chev("down", 14, "#666", 1.3)}</button>
          <button class="refresh" aria-label="새로 고침">${icon(18, 18, "0 0 18 18", svg`<path d="M15.500 5A7.800 7.800 0 1017 9M16 .500V5.500H11" stroke="#666" stroke-width="1.300"/>`)}</button>
        </div>
        <label class="search">${icon(17, 17, "0 0 17 17", svg`<circle cx="10.500" cy="6" r="5.200" stroke="#777" stroke-width="1.200"/><path d="M6.800 9.800L1 16" stroke="#777" stroke-width="1.200"/>`)}
          <input type="text" aria-label="검색" placeholder="skywa 검색"></label>
      </div>
      <div class="main">
        <div class="side">
          ${places.map((p) => html`<div class=${classMap({ place: true, deep: p.level === 1, group: p.level === 0, current: !!p.current })}>
            <a href="#"><span class="tw">${p.arrow ? chev(p.arrow, 12, p.arrow === "down" ? "#222" : "#8a8a8a", 1.7) : nothing}</span>
            <span class="pic">${p.icon}</span><span>${p.label}</span>${p.pinned ? html`<span class="pin">${pin}</span>` : nothing}</a></div>`)}
        </div>
        <div class="track"><div class="thumb"></div></div>
        <table class="list">
          <thead><tr><th><span>이름</span><span class="caret">${chev("up", 11, "#777", 1.2)}</span></th><th>수정한 날짜</th><th>유형</th><th>크기</th></tr></thead>
          <tbody>${files.map(([n, i, d, t, s]) => html`<tr class=${s ? "sel" : ""}><td><span class="fi">${i}</span>${n}</td><td class="date">${d}</td><td>${t}</td><td>${s}</td></tr>`)}</tbody>
        </table>
        <div class="track right"><div class="thumb"></div></div>
      </div>
      <footer class="status"><span>17개 항목</span><span class="bar"></span><span>1개 항목 선택함 7.66KB</span><span class="bar"></span><span class="grow"></span>
        <button class="mode on" aria-label="자세히">${icon(14, 14, "0 0 14 14", svg`<path d="M0 1.500h14M0 5.500h14M0 9.500h14M0 13.500h14" stroke="#111"/>`)}</button>
        <button class="mode big" aria-label="큰 아이콘">${icon(14, 14, "0 0 14 14", svg`<rect x=".5" y=".5" width="13" height="11" stroke="#111"/><path d="M0 13.500h14" stroke="#111"/>`)}</button>
      </footer>`;
  }
}

/* ---------- task bar ---------- */

const squircle = "M14.500 0C25 0 29 4 29 14.500S25 29 14.500 29 0 25 0 14.500 4 0 14.500 0z";
const app = (body: unknown) => icon(29, 29, "0 0 29 29", body);
const apps: { name: string; pic: unknown; run?: boolean; active?: boolean }[] = [
  { name: "시작", pic: app(svg`<defs><linearGradient id="w" x1="0" y1="0" x2="1" y2="1"><stop offset="0" stop-color="#4cc8f8"/><stop offset="1" stop-color="#0370cc"/></linearGradient></defs><path d="M1 0h12.800v13.800H0V1a1 1 0 011-1zM15.200 0H28a1 1 0 011 1v12.800H15.200zM0 15.200h13.800V29H1a1 1 0 01-1-1zM15.200 15.200H29V28a1 1 0 01-1 1H15.200z" fill="url(#w)"/>`) },
  { name: "검색", pic: app(svg`<circle cx="16" cy="12" r="10.500" fill="#e9efd6" stroke="#222" stroke-width="2.500"/><path d="M8.500 19.500L2 27" stroke="#222" stroke-width="3" stroke-linecap="round"/>`) },
  { name: "작업 보기", pic: app(svg`<defs><linearGradient id="tv" x1="0" y1="0" x2="0" y2="1"><stop offset="0" stop-color="#444"/><stop offset="1" stop-color="#151515"/></linearGradient></defs><rect x="0" y="7" width="22" height="21" rx="1" fill="url(#tv)"/><rect x="7.500" y="0" width="22" height="20" rx="1" fill="#fafafa" opacity=".95"/><path d="M7.500 7H22v13H7.500z" fill="#a5a5a5"/>`) },
  { name: "채팅", pic: app(svg`<defs><linearGradient id="ch" x1="0" y1="0" x2="1" y2="1"><stop offset="0" stop-color="#a7619b"/><stop offset=".5" stop-color="#5c5cc7"/><stop offset="1" stop-color="#6a63d8"/></linearGradient></defs><path d="M14.500 0A14 14 0 1114 28H1c-1 0-1-1 0-2l1.500-3A14 14 0 0114.500 0z" fill="url(#ch)"/><rect x="6" y="8" width="12" height="12" rx="1.500" fill="#fff"/><path d="M19.500 12l4-3v10l-4-3z" fill="#fff"/>`) },
  { name: "Edge", pic: app(svg`<defs><linearGradient id="e1" x1="0" y1=".3" x2="1" y2=".3"><stop offset="0" stop-color="#1a9be0"/><stop offset=".5" stop-color="#33c4d4"/><stop offset="1" stop-color="#62db52"/></linearGradient><linearGradient id="e2" x1="0" y1="0" x2="1" y2="1"><stop offset="0" stop-color="#1c8fe0"/><stop offset="1" stop-color="#0a4f96"/></linearGradient></defs>
    <path d="M0 14C1 5 7 0 15 0c8.500 0 14 6 14 12 0 5-3.500 8-8 8-3 0-4.500-1-4.500-2 0-.8 1.500-1.500 1.500-4 0-3-3-5.500-7-5.500C5.500 8.500 1 11 0 14z" fill="url(#e1)"/><path d="M0 14C1 10 5 8 10.500 8.500 8 10.500 7 14 7.500 18c.8 6 5 9.500 8.500 11C6.500 30 0 23 0 14z" fill="#1683d8"/><path d="M11 12c-2 8 4 14 16 10-2.500 4.500-7 7-12 7C9 27 7 22 7.500 18c.3-2.500 1.500-5 3.500-6z" fill="url(#e2)"/>`) },
  { name: "Store", pic: app(svg`<defs><linearGradient id="st" x1="0" y1="0" x2="1" y2="1"><stop offset="0" stop-color="#0d70bd"/><stop offset="1" stop-color="#2a3052"/></linearGradient></defs><path d="M8 6V1.500h13V6" stroke="#22b4ef" stroke-width="2"/><path d="M0 5h29v21a3 3 0 01-3 3H3a3 3 0 01-3-3z" fill="url(#st)"/><path d="M8.500 11h5.300v5.300H8.500z" fill="#f25022"/><path d="M14.800 11h5.300v5.300h-5.300z" fill="#7fba00"/><path d="M8.500 17.200h5.300v5.300H8.500z" fill="#00a4ef"/><path d="M14.800 17.200h5.300v5.300h-5.300z" fill="#ffb900"/>`) },
  { name: "빠른 검색", pic: app(svg`<path d=${squircle} fill="#1d47c4"/><path d="M15.500 7.500a6.500 6.500 0 100 12.500c2.500-.8 3.500-2.500 4-4M17.500 18.500l4 4.500M13.500 9.500h9.500M14 12.500h8M15 15.500h5" stroke="#dbe5ff" stroke-width="1.600"/>`) },
  { name: "스위치", pic: app(svg`<path d=${squircle} fill="#615cc0"/><path d="M5.500 12a9.500 9.500 0 0118 0M5.500 17a9.500 9.500 0 0018 0" stroke="#b8b4f0" stroke-width="1.700"/><path d="M9.500 13h5V10l5.500 4.500-5.500 4.500v-3h-5z" fill="#fff"/>`) },
  { name: "Bixby", pic: app(svg`<defs><linearGradient id="bx" x1="0" y1="0" x2="1" y2="1"><stop offset="0" stop-color="#4a86f5"/><stop offset="1" stop-color="#19c8cf"/></linearGradient></defs><path d=${squircle} fill="url(#bx)"/><path d="M7 6.500v8c0 3.500 2.500 6 6 6.800V8c0-1-.6-1.500-1.500-1.500z" fill="#fff"/><path d="M14.200 9h2.300c4 0 6 3 5 6.800-.9 3.400-3.500 5.500-7.300 5.500z" fill="#fff"/>`) },
  { name: "Chrome", run: true, pic: app(svg`<circle cx="14.500" cy="14.500" r="14" fill="#fcc31e"/><path d="M2.400 7.500A14 14 0 0126.600 7.500L14.500 8 9 17.500z" fill="#e33b2e"/><path d="M2.400 7.500L9 18l5.500 3-3.500 7.200A14 14 0 012.400 7.500z" fill="#2aa24c"/><circle cx="14.500" cy="14.500" r="6.800" fill="#fff"/><circle cx="14.500" cy="14.500" r="5.400" fill="#2c76ea"/>`) },
  { name: "파일 탐색기", run: true, active: true, pic: app(svg`<defs><linearGradient id="ex" x1="0" y1="0" x2="0" y2="1"><stop offset="0" stop-color="#ffd45c"/><stop offset="1" stop-color="#fdb813"/></linearGradient></defs><path d="M0 2.500A1.500 1.500 0 011.500 1H10l3 3.500V8H0z" fill="#e3a008"/><path d="M0 6h11l2-2h16v22a1.500 1.500 0 01-1.500 1.500h-26A1.500 1.500 0 010 26z" fill="url(#ex)"/><path d="M5 27.500V23a3 3 0 013-3h13a3 3 0 013 3v4.500z" fill="#1377c8"/><path d="M9 23.700h11" stroke="#0a4c8a" stroke-width="1.500"/>`) },
  { name: "pgAdmin 4", run: true, pic: elephantBlue(30) },
  { name: "STS", run: true, pic: app(svg`<circle cx="14" cy="14.500" r="12.500" fill="#2f8f3c" stroke="#2a8137" stroke-width="3" stroke-dasharray="2.500 2"/><path d="M28 4c1.800 9 1 18-5 22-5 3.500-12 3-16 0C4 22 3 18 8 14.500 14 11 24 13 28 4z" fill="#77bc43"/><path d="M26 9c-3 4-9 4-13.500 6.500C8 18 7 22 9 24c10 0 17-5 17-15z" fill="#94d256"/><path d="M4 25.500c8-1 14-4 18.500-10.500" stroke="#1d6427" stroke-width="1.500"/>`) },
];

@customElement("task-bar")
export class TaskBar extends LitElement {
  static styles = [reset, css`
    :host { display: grid; grid-template-columns: 1fr auto 1fr; align-items: center; height: 60px; box-sizing: border-box; font: 15px/20px "Noto Sans CJK KR", sans-serif; color: #222;
      border-top: 1px solid #d3cfae;
      background: linear-gradient(90deg, #ecdfc0 0, #efdfcf 9%, #ecdfc8 17%, #e8e4b4 22%, #ebdfb8 25%, #dbe8b4 29%, #dfe9b0 36%, #ebe5ae 46%, #dce3c2 56%, #d8e4b8 66%, #dbe3bd 78%, #e8dfb4 83%, #e3e9ac 89%, #e0e8b4 96%, #ece2b4 100%); }
    .weather { display: flex; align-items: center; gap: 12px; padding-left: 29px; text-align: left; width: max-content; }
    .sky { color: #5c564e; }
    .apps { display: flex; gap: 7px; }
    .app { position: relative; width: 48px; height: 48px; border-radius: 5px; display: grid; place-items: center; }
    .app.active { background: rgba(250,250,248,.75); box-shadow: 0 0 0 1px rgba(0,0,0,.05); }
    .mark { position: absolute; bottom: 0; left: 20px; width: 8px; height: 4px; border-radius: 2px; background: #7d826c; }
    .active .mark { left: 14px; width: 20px; background: #0a78d4; }
    .tray { display: flex; align-items: center; justify-content: flex-end; padding-right: 24px; }
    .t { width: 30px; height: 30px; display: grid; place-items: center; }
    .place { width: 38px; }
    .ime { width: 48px; font: 700 26px/30px "Liberation Sans", sans-serif; color: #e4e4da; -webkit-text-stroke: 1px #8d8d84; }
    .han { margin-right: 7px; }
    .clock { text-align: right; margin: 0 10px 0 15px; white-space: nowrap; }
    .badge { width: 20px; height: 20px; border-radius: 50%; background: #0a78d4; color: #fff; text-align: center; font-size: 14px; }
  `];
  render() {
    return html`
      <button class="weather">${icon(24, 25, "0 0 24 25", svg`<defs><linearGradient id="mo" x1="0" y1="0" x2="0" y2="1"><stop offset="0" stop-color="#ffee00"/><stop offset=".5" stop-color="#ffdf1a"/><stop offset="1" stop-color="#fb9f13"/></linearGradient></defs><path d="M14 1C20 3 23.500 8 23 13.500 22.500 20 17 24.500 10.500 24.500 5.500 24 2 21.500 0 17c8 1 15-6 14-16z" fill="url(#mo)"/>`)}<span>16°C<br><span class="sky">맑음</span></span></button>
      <nav class="apps">${apps.map((a) => html`<button class=${classMap({ app: true, active: !!a.active })} aria-label=${a.name}>${a.pic}${a.run ? html`<span class="mark"></span>` : nothing}</button>`)}</nav>
      <div class="tray">
        <button class="t" aria-label="숨겨진 아이콘">${icon(16, 9, "0 0 16 9", svg`<path d="M.5 8.500l7.500-7 7.500 7" stroke="#222" stroke-width="1.500"/>`)}</button>
        <button class="t" aria-label="OneDrive">${icon(20, 14, "0 0 20 14", svg`<path d="M4.500 13a4 4 0 01-.5-7.500 6 6 0 0111-1A4.500 4.500 0 0115.500 13z" fill="#e3e3df"/><path d="M1.500 7A4 4 0 014.500 5 6 6 0 0115 4.500L3 11z" fill="#8c8c8a"/><path d="M4.500 13a4 4 0 01-.5-7.500 6 6 0 0111-1A4.500 4.500 0 0115.500 13z" stroke="#222" stroke-width="1.400"/>`)}</button>
        <button class="t place" aria-label="위치">${icon(18, 19, "0 0 18 19", svg`<path d="M1 10.500L17 1l-3.500 17-4-6z" stroke="#17509b" stroke-width="1.600"/>`)}</button>
        <button class="t ime">A</button>
        <button class="t ime han" aria-label="한글">${icon(18, 20, "0 0 18 20", svg`<g stroke="#a5a894" stroke-width="3"><path d="M9 .500V3M.5 3.500h17"/><circle cx="9" cy="10" r="4.500"/></g><g stroke="#fafaf5" stroke-width="1.700"><path d="M9 .500V3M.5 3.500h17"/><circle cx="9" cy="10" r="4.500"/></g><circle cx="9" cy="17.500" r="1.800" fill="#fafaf5" stroke="#a5a894" stroke-width=".6"/>`)}</button>
        <button class="t" aria-label="Wi-Fi">${icon(20, 15, "0 0 20 15", svg`<path d="M1 5.500a12.500 12.500 0 0118 0" stroke="#aab08f" stroke-width="1.300"/><path d="M3.700 8a9 9 0 0112.600 0M6.300 10.700a5.200 5.200 0 017.400 0" stroke="#222" stroke-width="1.500"/><circle cx="10" cy="13" r="1.900" fill="#222"/>`)}</button>
        <button class="t" aria-label="볼륨">${icon(20, 16, "0 0 20 16", svg`<path d="M1 5.500h3L8.500 1.500v13L4 10.500H1z" stroke="#222" stroke-width="1.400"/><path d="M10.800 5.500a3.500 3.500 0 010 5M13.300 3a7 7 0 010 10" stroke="#222" stroke-width="1.400"/><path d="M16 1a10 10 0 010 14" stroke="#aab08f" stroke-width="1.300"/>`)}</button>
        <button class="t" aria-label="배터리">${icon(20, 13, "0 0 20 13", svg`<rect x=".8" y=".8" width="16" height="11.400" rx="2.500" stroke="#222" stroke-width="1.500"/><rect x="3" y="3" width="6" height="7" fill="#222"/><path d="M18.500 4.500v4" stroke="#222" stroke-width="2.500"/>`)}</button>
        <div class="clock">오후 7:48<br>2022-05-03</div><span class="badge">4</span>
      </div>`;
  }
}

@customElement("app-root")
export class AppRoot extends LitElement {
  static styles = css`
    :host { display: block; }
    .desktop { position: relative; display: grid; grid-template-rows: minmax(0, 1fr) auto; height: 100vh; min-height: 960px; overflow: hidden; }
    file-explorer { position: absolute; left: 504px; right: 8px; top: 209px; height: 742px; box-sizing: border-box; }
    task-bar { position: relative; }
  `;
  render() {
    return html`<div class="desktop"><pg-admin></pg-admin><file-explorer></file-explorer><task-bar></task-bar></div>`;
  }
}
